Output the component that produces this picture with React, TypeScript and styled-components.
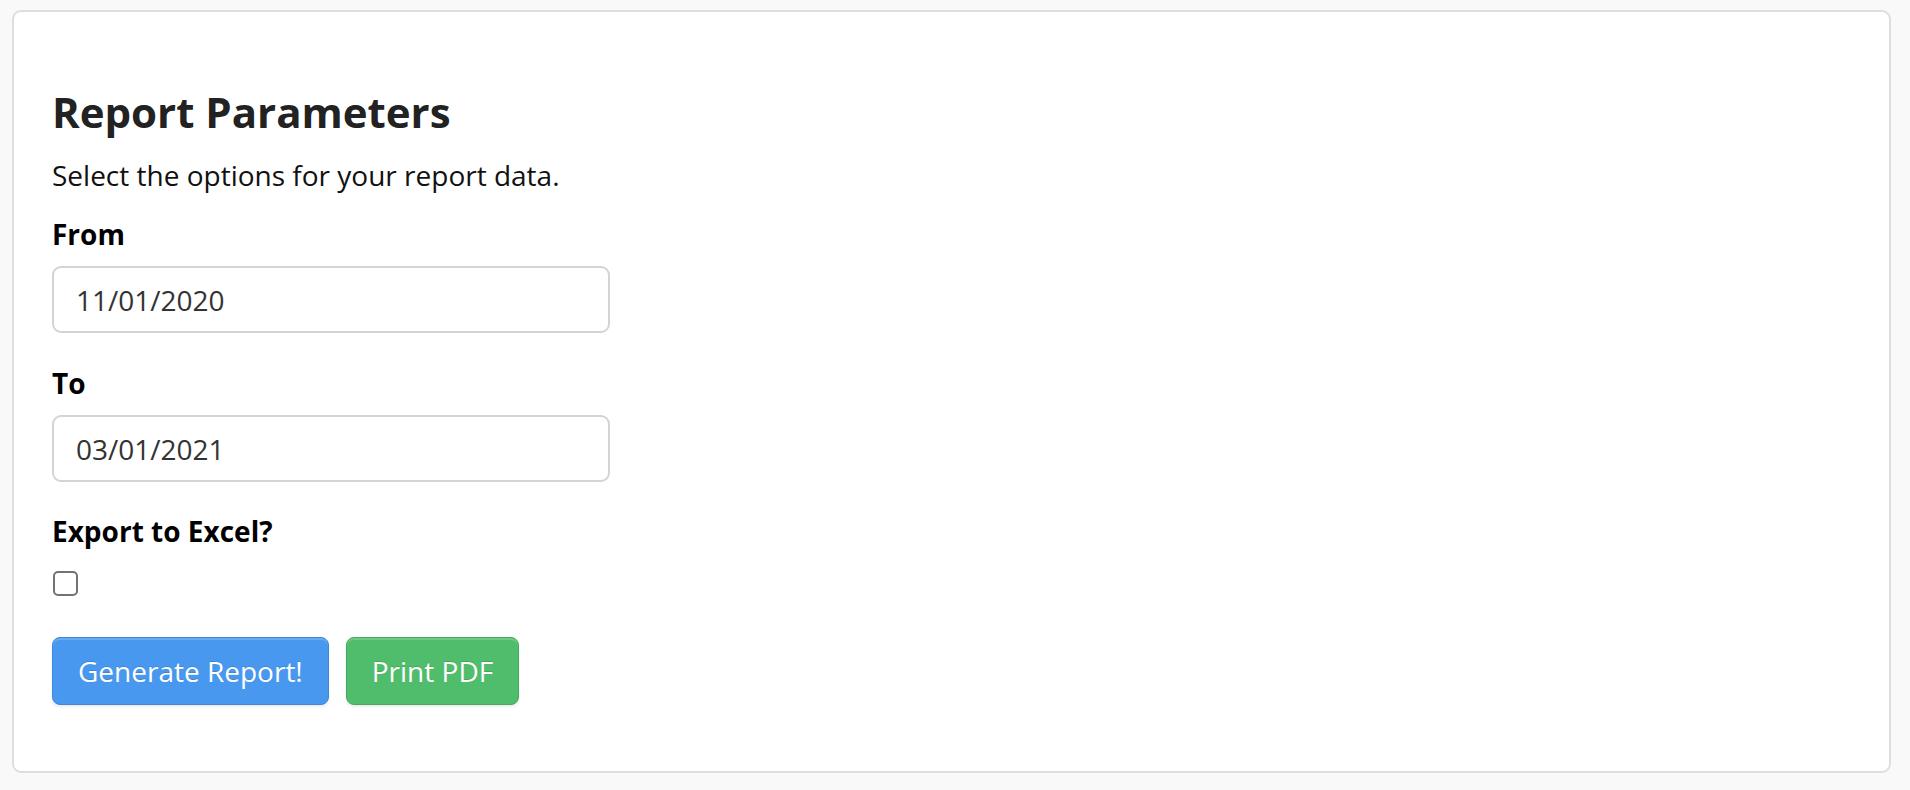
import React from 'react'
import styled, { createGlobalStyle } from 'styled-components'

const GlobalStyle = createGlobalStyle`
  html, body {
    margin: 0;
    padding: 0;
    background: #f9f9f9;
    font-family: 'Open Sans', 'Noto Sans', sans-serif;
  }
  * { box-sizing: border-box; }
`

const Card = styled.section`
  margin: 10px 19px 0 12px;
  height: 763px;
  background: #fff;
  border: 2px solid #dedede;
  border-radius: 9px;
  padding: 75px 38px 68px;
`

const Heading = styled.h2`
  margin: 0 0 17px;
  font-size: 42px;
  line-height: 50px;
  font-weight: 700;
  color: #222;
`

const Intro = styled.p`
  margin: 0 0 17px;
  font-size: 28px;
  line-height: 42px;
  color: #111;
`

const Field = styled.div<{ $gap: number }>`
  display: flex;
  flex-direction: column;
  align-items: flex-start;
  margin-bottom: ${p => p.$gap}px;
`

const Label = styled.label<{ $gap: number }>`
  display: block;
  font-size: 28px;
  line-height: 42px;
  font-weight: 700;
  color: #000;
  margin-bottom: ${p => p.$gap}px;
`

const DateInput = styled.input`
  width: 558px;
  height: 67px;
  padding: 0 22px;
  border: 2px solid #d4d4d4;
  border-radius: 9px;
  font-family: inherit;
  font-size: 28px;
  color: #333;
  background: #fff;
  outline: none;
`

const Check = styled.input`
  appearance: none;
  margin: 0 0 0 1px;
  width: 25px;
  height: 25px;
  border: 2px solid #737373;
  border-radius: 5px;
  background: #fff;
`

const Actions = styled.div`
  display: flex;
  gap: 17px;
`

const Button = styled.button<{ $tone: 'blue' | 'green' }>`
  height: 68px;
  padding: 0 25px;
  font-family: inherit;
  font-size: 28px;
  color: #fff;
  border-radius: 8px;
  cursor: pointer;
  text-shadow: 0 -1px 0 rgba(0, 0, 0, 0.12);
  background: ${p => (p.$tone === 'blue' ? '#4798ee' : '#4fbd6b')};
  border: 1px solid ${p => (p.$tone === 'blue' ? '#3e88d8' : '#45ab5f')};
  box-shadow: inset 0 2px 0 rgba(255, 255, 255, 0.18), 0 2px 3px rgba(0, 0, 0, 0.08);
`

export default function App() {
  return (
    <>
      <GlobalStyle />
      <Card>
        <Heading>Report Parameters</Heading>
        <Intro>Select the options for your report data.</Intro>
        <Field $gap={29}>
          <Label $gap={11}>From</Label>
          <DateInput defaultValue="11/01/2020" />
        </Field>
        <Field $gap={28}>
          <Label $gap={11}>To</Label>
          <DateInput defaultValue="03/01/2021" />
        </Field>
        <Field $gap={41}>
          <Label $gap={19}>Export to Excel?</Label>
          <Check type="checkbox" />
        </Field>
        <Actions>
          <Button $tone="blue">Generate Report!</Button>
          <Button $tone="green">Print PDF</Button>
        </Actions>
      </Card>
    </>
  )
}
